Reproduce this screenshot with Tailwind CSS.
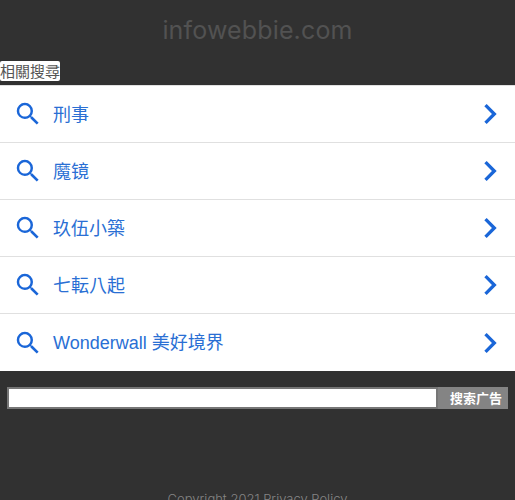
<!DOCTYPE html>
<html>
<head>
<meta charset="utf-8">
<script src="https://cdn.jsdelivr.net/npm/@tailwindcss/browser@4"></script>
</head>
<body class="bg-[#313131] h-[500px] overflow-hidden font-['Liberation_Sans','Noto_Sans_CJK_TC',sans-serif]">
<header class="h-[61px] pt-[14px] text-center text-[25px] leading-[32px] text-[#525252] font-['Inter',sans-serif] tracking-[0.15px]">infowebbie.com</header>
<div class="h-[24px] flex items-start"><span class="bg-white rounded-[2px] text-[#555555] text-[15px] leading-[20px] h-[20px] block font-['Noto_Sans_CJK_TC',sans-serif]">相關搜尋</span></div>
<ul class="bg-white border-t border-[#e0e0e0] h-[286px]">
  <li class="h-[57px] flex items-center border-b border-[#e0e0e0] pl-[13px] pr-[5px] text-[#2a6fd4] text-[18px]">
    <svg class="w-[30px] h-[30px]" viewBox="0 0 24 24" fill="#1a66d8"><path d="M15.500 14h-.79l-.28-.27A6.471 6.471 0 0 0 16 9.500 6.500 6.500 0 1 0 9.500 16c1.610 0 3.090-.59 4.230-1.570l.27.28v.79l5 4.990L20.490 19l-4.990-5zm-6 0C7.010 14 5 11.990 5 9.500S7.010 5 9.500 5 14 7.010 14 9.500 11.990 14 9.500 14z"/></svg>
    <span class="ml-[10px] pt-[2px] flex-1">刑事</span>
    <svg class="w-[40px] h-[40px]" viewBox="0 0 24 24" fill="#1a66d8"><path d="M10 6L8.590 7.410 13.170 12l-4.580 4.590L10 18l6-6z"/></svg>
  </li>
  <li class="h-[57px] flex items-center border-b border-[#e0e0e0] pl-[13px] pr-[5px] text-[#2a6fd4] text-[18px]">
    <svg class="w-[30px] h-[30px]" viewBox="0 0 24 24" fill="#1a66d8"><path d="M15.500 14h-.79l-.28-.27A6.471 6.471 0 0 0 16 9.500 6.500 6.500 0 1 0 9.500 16c1.610 0 3.090-.59 4.230-1.570l.27.28v.79l5 4.990L20.490 19l-4.990-5zm-6 0C7.010 14 5 11.990 5 9.500S7.010 5 9.500 5 14 7.010 14 9.500 11.990 14 9.500 14z"/></svg>
    <span class="ml-[10px] pt-[2px] flex-1">魔镜</span>
    <svg class="w-[40px] h-[40px]" viewBox="0 0 24 24" fill="#1a66d8"><path d="M10 6L8.590 7.410 13.170 12l-4.580 4.590L10 18l6-6z"/></svg>
  </li>
  <li class="h-[57px] flex items-center border-b border-[#e0e0e0] pl-[13px] pr-[5px] text-[#2a6fd4] text-[18px]">
    <svg class="w-[30px] h-[30px]" viewBox="0 0 24 24" fill="#1a66d8"><path d="M15.500 14h-.79l-.28-.27A6.471 6.471 0 0 0 16 9.500 6.500 6.500 0 1 0 9.500 16c1.610 0 3.090-.59 4.230-1.570l.27.28v.79l5 4.990L20.490 19l-4.990-5zm-6 0C7.010 14 5 11.990 5 9.500S7.010 5 9.500 5 14 7.010 14 9.500 11.990 14 9.500 14z"/></svg>
    <span class="ml-[10px] pt-[2px] flex-1">玖伍小築</span>
    <svg class="w-[40px] h-[40px]" viewBox="0 0 24 24" fill="#1a66d8"><path d="M10 6L8.590 7.410 13.170 12l-4.580 4.590L10 18l6-6z"/></svg>
  </li>
  <li class="h-[57px] flex items-center border-b border-[#e0e0e0] pl-[13px] pr-[5px] text-[#2a6fd4] text-[18px]">
    <svg class="w-[30px] h-[30px]" viewBox="0 0 24 24" fill="#1a66d8"><path d="M15.500 14h-.79l-.28-.27A6.471 6.471 0 0 0 16 9.500 6.500 6.500 0 1 0 9.500 16c1.610 0 3.090-.59 4.230-1.570l.27.28v.79l5 4.990L20.490 19l-4.990-5zm-6 0C7.010 14 5 11.990 5 9.500S7.010 5 9.500 5 14 7.010 14 9.500 11.990 14 9.500 14z"/></svg>
    <span class="ml-[10px] pt-[2px] flex-1">七転八起</span>
    <svg class="w-[40px] h-[40px]" viewBox="0 0 24 24" fill="#1a66d8"><path d="M10 6L8.590 7.410 13.170 12l-4.580 4.590L10 18l6-6z"/></svg>
  </li>
  <li class="h-[57px] flex items-center pl-[13px] pr-[5px] text-[#2a6fd4] text-[18px]">
    <svg class="w-[30px] h-[30px]" viewBox="0 0 24 24" fill="#1a66d8"><path d="M15.500 14h-.79l-.28-.27A6.471 6.471 0 0 0 16 9.500 6.500 6.500 0 1 0 9.500 16c1.610 0 3.090-.59 4.230-1.570l.27.28v.79l5 4.990L20.490 19l-4.990-5zm-6 0C7.010 14 5 11.990 5 9.500S7.010 5 9.500 5 14 7.010 14 9.500 11.990 14 9.500 14z"/></svg>
    <span class="ml-[10px] pt-[2px] flex-1">Wonderwall 美好境界</span>
    <svg class="w-[40px] h-[40px]" viewBox="0 0 24 24" fill="#1a66d8"><path d="M10 6L8.590 7.410 13.170 12l-4.580 4.590L10 18l6-6z"/></svg>
  </li>
</ul>
<form class="mt-[16px] mx-[7px] flex h-[22px] bg-[#848484]">
  <input type="text" class="w-[431px] h-[22px] bg-white border-2 border-[#767676]">
  <span class="flex-1 pl-[12px] text-white font-bold text-[13px] leading-[22px] font-['Noto_Sans_CJK_SC',sans-serif]">搜索广告</span>
</form>
<footer class="mt-[80px] text-center text-[13px] leading-[20px] text-[#858585] font-['Inter',sans-serif] font-light">Copyright 2021 Privacy Policy</footer>
</body>
</html>
